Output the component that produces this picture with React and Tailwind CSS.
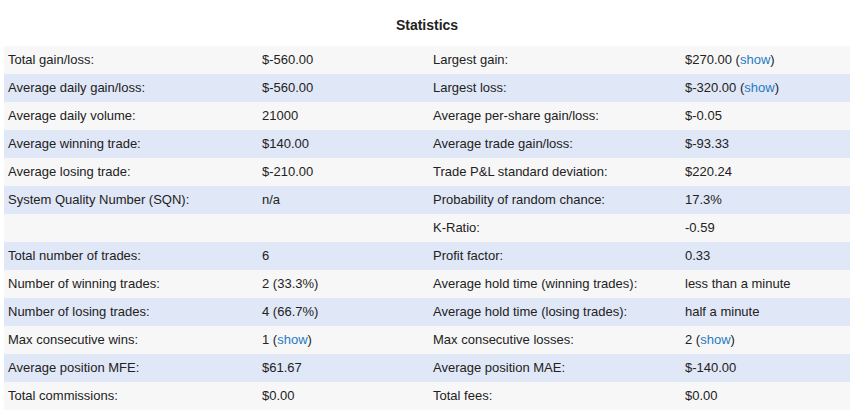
import React from "react";

const rows = [
  ["Total gain/loss:", "$-560.00", "Largest gain:", ["$270.00 ", true]],
  ["Average daily gain/loss:", "$-560.00", "Largest loss:", ["$-320.00 ", true]],
  ["Average daily volume:", "21000", "Average per-share gain/loss:", "$-0.05"],
  ["Average winning trade:", "$140.00", "Average trade gain/loss:", "$-93.33"],
  ["Average losing trade:", "$-210.00", "Trade P&L standard deviation:", "$220.24"],
  ["System Quality Number (SQN):", "n/a", "Probability of random chance:", "17.3%"],
  ["", "", "K-Ratio:", "-0.59"],
  ["Total number of trades:", "6", "Profit factor:", "0.33"],
  ["Number of winning trades:", "2 (33.3%)", "Average hold time (winning trades):", "less than a minute"],
  ["Number of losing trades:", "4 (66.7%)", "Average hold time (losing trades):", "half a minute"],
  ["Max consecutive wins:", ["1 ", true], "Max consecutive losses:", ["2 ", true]],
  ["Average position MFE:", "$61.67", "Average position MAE:", "$-140.00"],
  ["Total commissions:", "$0.00", "Total fees:", "$0.00"],
];

function Cell({ value }) {
  if (Array.isArray(value)) {
    return (
      <span>
        {value[0]}(<span className="text-[#1f7bc4]">show</span>)
      </span>
    );
  }
  return <span>{value}</span>;
}

export default function App() {
  return (
    <div
      className="w-[857px] h-[418px] bg-white text-[#222] overflow-hidden"
      style={{ fontFamily: '"Liberation Sans", Arial, sans-serif' }}
    >
      <div className="pl-[4px] w-[850px]">
        <h2 className="pt-[16px] pb-[12px] text-center text-[14px] leading-[18px] font-bold">
          Statistics
        </h2>
        <div>
          {rows.map((r, i) => (
            <div
              key={i}
              className={`grid grid-cols-[254px_171px_252px_169px] h-[28px] items-center text-[13px] ${
                i % 2 === 0 ? "bg-[#f7f7f7]" : "bg-[#e0e7f6]"
              }`}
            >
              {r.map((c, j) => (
                <div key={j} className="px-[4px] whitespace-nowrap">
                  <Cell value={c} />
                </div>
              ))}
            </div>
          ))}
        </div>
      </div>
    </div>
  );
}
